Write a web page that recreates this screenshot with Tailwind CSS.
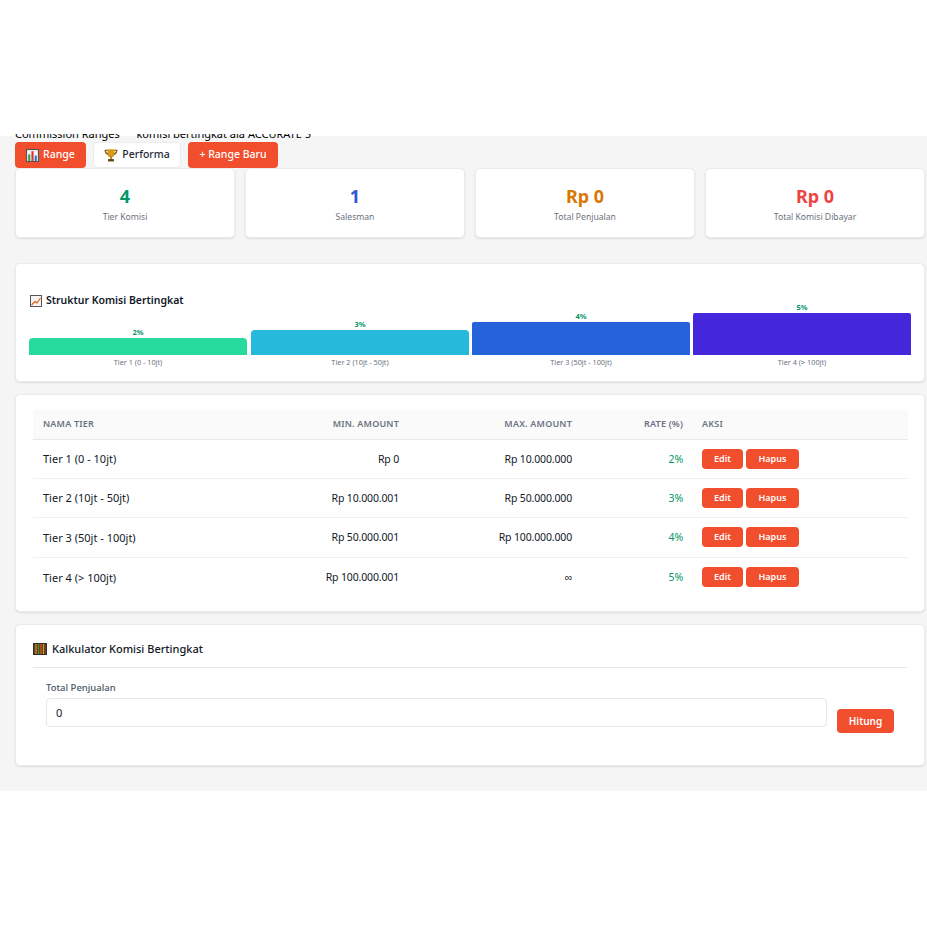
<!DOCTYPE html>
<html lang="id">
<head>
    <meta charset="UTF-8">
    <meta name="viewport" content="width=device-width, initial-scale=1.0">
    <title>Commission Ranges</title>
    <script src="https://cdn.jsdelivr.net/npm/@tailwindcss/browser@4"></script>
</head>
<body class="bg-white font-['Noto_Sans',sans-serif] text-[#1f2937]">
    <div class="h-[134px]"></div>
    <div class="h-[657px] overflow-hidden">
        <div class="h-[2px]"></div>
        <main class="flow-root h-[655px] bg-[#f5f5f5] pl-[15px] pr-[2px]">
            <!-- Page title, cut off at the top as in the screen -->
            <p class="-mt-[10px] h-[16px] text-[11px] leading-[15px] text-black whitespace-nowrap">Commission Ranges <span class="text-transparent">—</span> komisi bertingkat ala ACCURATE 5</p>

            <!-- Toolbar -->
            <div class="flex h-[26px] gap-[7px] text-[10.500px] font-medium">
                <button class="flex w-[71px] items-center justify-center gap-[4px] rounded-[4px] bg-[#f04e2d] text-white">
                    <svg class="h-[13px] w-[13px]" viewBox="0 0 12 12"><rect x=".5" y=".5" width="11" height="11" fill="#f5f5f5" stroke="#555"/><rect x="2" y="5" width="2" height="6" fill="#2f9e44"/><rect x="5" y="2" width="2" height="9" fill="#e03131"/><rect x="8" y="6" width="2" height="5" fill="#1c7ed6"/></svg>
                    Range
                </button>
                <button class="flex w-[88px] items-center justify-center gap-[4px] rounded-[4px] border border-[#ececec] bg-white text-[#1f2937]">
                    <svg class="h-[14px] w-[14px]" viewBox="0 0 12 12"><path d="M3 1h6v4a3 3 0 0 1-6 0z" fill="#d99a1c"/><path d="M3 2H1c0 2 1 3 2.500 3.500M9 2h2c0 2-1 3-2.500 3.500" fill="none" stroke="#8a5a0a"/><rect x="5.300" y="7" width="1.400" height="2.500" fill="#a8730f"/><rect x="3.500" y="9.500" width="5" height="2" fill="#5c4208"/></svg>
                    Performa
                </button>
                <button class="w-[90px] rounded-[4px] bg-[#f04e2d] text-white">+ Range Baru</button>
            </div>

            <!-- Stat cards -->
            <div class="grid w-[910px] grid-cols-4 gap-[10px]">
                <div class="flex h-[70px] flex-col items-center rounded-[5px] border border-[#ebebeb] bg-white pt-[15px] shadow-[0_1px_2px_rgba(0,0,0,0.1)]">
                    <span class="text-[18px] leading-[24px] font-bold text-[#059669]">4</span>
                    <span class="mt-[3px] text-[8.600px] leading-[13px] text-[#6b7280]">Tier Komisi</span>
                </div>
                <div class="flex h-[70px] flex-col items-center rounded-[5px] border border-[#ebebeb] bg-white pt-[15px] shadow-[0_1px_2px_rgba(0,0,0,0.1)]">
                    <span class="text-[18px] leading-[24px] font-bold text-[#3056d3]">1</span>
                    <span class="mt-[3px] text-[8.600px] leading-[13px] text-[#6b7280]">Salesman</span>
                </div>
                <div class="flex h-[70px] flex-col items-center rounded-[5px] border border-[#ebebeb] bg-white pt-[15px] shadow-[0_1px_2px_rgba(0,0,0,0.1)]">
                    <span class="text-[18px] leading-[24px] font-bold text-[#d97706]">Rp 0</span>
                    <span class="mt-[3px] text-[8.600px] leading-[13px] text-[#6b7280]">Total Penjualan</span>
                </div>
                <div class="flex h-[70px] flex-col items-center rounded-[5px] border border-[#ebebeb] bg-white pt-[15px] shadow-[0_1px_2px_rgba(0,0,0,0.1)]">
                    <span class="text-[18px] leading-[24px] font-bold text-[#ef4444]">Rp 0</span>
                    <span class="mt-[3px] text-[8.600px] leading-[13px] text-[#6b7280]">Total Komisi Dibayar</span>
                </div>
            </div>

            <!-- Chart -->
            <section class="mt-[25px] h-[119px] w-[910px] rounded-[5px] border border-[#ebebeb] bg-white px-[13px] pt-[29px] shadow-[0_1px_2px_rgba(0,0,0,0.1)]">
                <h2 class="flex h-[16px] items-center gap-[4px] pl-[1px] text-[10.500px] font-semibold text-[#111827]">
                    <svg class="h-3 w-3" viewBox="0 0 12 12"><rect x=".5" y=".5" width="11" height="11" fill="#f5f5f5" stroke="#555"/><path d="M1.500 10 5 6.500l2 1.500 3.500-5" fill="none" stroke="#e8590c" stroke-width="1.200"/></svg>
                    Struktur Komisi Bertingkat
                </h2>
                <div class="-mt-[2px] flex h-[48px] items-end gap-[3px]">
                    <div class="mr-[1px] w-[218px] text-center">
                        <div class="text-[7.500px] leading-[11px] font-bold text-[#059669]">2%</div>
                        <div class="h-[17px] rounded-t-[4px] bg-[#27db9f]"></div>
                    </div>
                    <div class="w-[218px] text-center">
                        <div class="text-[7.500px] leading-[11px] font-bold text-[#059669]">3%</div>
                        <div class="h-[25px] rounded-t-[4px] bg-[#25b9db]"></div>
                    </div>
                    <div class="w-[218px] text-center">
                        <div class="text-[7.500px] leading-[11px] font-bold text-[#059669]">4%</div>
                        <div class="h-[33px] rounded-t-[2px] bg-[#2563db]"></div>
                    </div>
                    <div class="w-[218px] text-center">
                        <div class="text-[7.500px] leading-[11px] font-bold text-[#059669]">5%</div>
                        <div class="h-[42px] rounded-t-[2px] bg-[#4527db]"></div>
                    </div>
                </div>
                <div class="mt-[1px] flex gap-[3px] text-center text-[7.300px] leading-[12px] text-[#6b7280]">
                    <div class="mr-[1px] w-[218px]">Tier 1 (0 - 10jt)</div>
                    <div class="w-[218px]">Tier 2 (10jt - 50jt)</div>
                    <div class="w-[218px]">Tier 3 (50jt - 100jt)</div>
                    <div class="w-[218px]">Tier 4 (&gt; 100jt)</div>
                </div>
            </section>

            <!-- Tier table -->
            <section class="mt-[12px] h-[218px] w-[910px] rounded-[5px] border border-[#ebebeb] bg-white px-[17px] pt-[15px] shadow-[0_1px_2px_rgba(0,0,0,0.1)]">
                <table class="w-[875px] table-fixed text-[10.500px] tracking-[-0.15px] text-[#111827]">
                    <thead>
                        <tr class="h-[29px] border-b border-[#e5e7eb] bg-[#fafafa] text-[9px] font-semibold tracking-[0.2px] text-[#6b7280]">
                            <th class="w-[220px] pb-[2px] pl-[10px] text-left font-semibold">NAMA TIER</th>
                            <th class="w-[156px] pb-[2px] pr-[10px] text-right font-semibold">MIN. AMOUNT</th>
                            <th class="w-[173px] pb-[2px] pr-[10px] text-right font-semibold">MAX. AMOUNT</th>
                            <th class="w-[111px] pb-[2px] pr-[10px] text-right font-semibold">RATE (%)</th>
                            <th class="pb-[2px] pl-[9px] text-left font-semibold">AKSI</th>
                        </tr>
                    </thead>
                    <tbody>
                        <tr class="h-[39px] border-b border-[#f0f0f0]">
                            <td class="pt-[2px] pl-[10px] text-[11px] tracking-normal">Tier 1 (0 - 10jt)</td>
                            <td class="pt-[2px] pr-[10px] text-right">Rp 0</td>
                            <td class="pt-[2px] pr-[10px] text-right">Rp 10.000.000</td>
                            <td class="pt-[2px] pr-[10px] text-right text-[#059669]">2%</td>
                            <td class="pl-[9px]"><div class="flex gap-[3px] text-[9px] font-semibold tracking-normal text-white"><button class="h-[20px] w-[41px] rounded-[4px] bg-[#f04e2d]">Edit</button><button class="h-[20px] w-[53px] rounded-[4px] bg-[#f04e2d]">Hapus</button></div></td>
                        </tr>
                        <tr class="h-[39px] border-b border-[#f0f0f0]">
                            <td class="pt-[2px] pl-[10px] text-[11px] tracking-normal">Tier 2 (10jt - 50jt)</td>
                            <td class="pt-[2px] pr-[10px] text-right">Rp 10.000.001</td>
                            <td class="pt-[2px] pr-[10px] text-right">Rp 50.000.000</td>
                            <td class="pt-[2px] pr-[10px] text-right text-[#059669]">3%</td>
                            <td class="pl-[9px]"><div class="flex gap-[3px] text-[9px] font-semibold tracking-normal text-white"><button class="h-[20px] w-[41px] rounded-[4px] bg-[#f04e2d]">Edit</button><button class="h-[20px] w-[53px] rounded-[4px] bg-[#f04e2d]">Hapus</button></div></td>
                        </tr>
                        <tr class="h-[40px] border-b border-[#f0f0f0]">
                            <td class="pt-[2px] pl-[10px] text-[11px] tracking-normal">Tier 3 (50jt - 100jt)</td>
                            <td class="pt-[2px] pr-[10px] text-right">Rp 50.000.001</td>
                            <td class="pt-[2px] pr-[10px] text-right">Rp 100.000.000</td>
                            <td class="pt-[2px] pr-[10px] text-right text-[#059669]">4%</td>
                            <td class="pl-[9px]"><div class="flex gap-[3px] text-[9px] font-semibold tracking-normal text-white"><button class="h-[20px] w-[41px] rounded-[4px] bg-[#f04e2d]">Edit</button><button class="h-[20px] w-[53px] rounded-[4px] bg-[#f04e2d]">Hapus</button></div></td>
                        </tr>
                        <tr class="h-[39px]">
                            <td class="pt-[2px] pl-[10px] text-[11px] tracking-normal">Tier 4 (&gt; 100jt)</td>
                            <td class="pt-[2px] pr-[10px] text-right">Rp 100.000.001</td>
                            <td class="pt-[2px] pr-[10px] text-right">∞</td>
                            <td class="pt-[2px] pr-[10px] text-right text-[#059669]">5%</td>
                            <td class="pl-[9px]"><div class="flex gap-[3px] text-[9px] font-semibold tracking-normal text-white"><button class="h-[20px] w-[41px] rounded-[4px] bg-[#f04e2d]">Edit</button><button class="h-[20px] w-[53px] rounded-[4px] bg-[#f04e2d]">Hapus</button></div></td>
                        </tr>
                    </tbody>
                </table>
            </section>

            <!-- Calculator -->
            <section class="mt-[12px] h-[142px] w-[910px] rounded-[5px] border border-[#ebebeb] bg-white px-[17px] pt-[15px] shadow-[0_1px_2px_rgba(0,0,0,0.1)]">
                <h2 class="flex h-[18px] items-center gap-[5px] text-[11px] font-medium text-[#111827]">
                    <svg class="h-[14px] w-[14px]" viewBox="0 0 14 14"><rect y="1" width="14" height="12" fill="#33302e"/><rect x="1" y="2" width="12" height="10" fill="#6b3f1d"/><path d="M3 2v10" stroke="#c9a227"/><path d="M5.500 2v10" stroke="#2f9e44"/><path d="M8 2v10" stroke="#e8590c"/><path d="M10.500 2v10" stroke="#c9a227"/></svg>
                    Kalkulator Komisi Bertingkat
                </h2>
                <div class="mt-[9px] border-t border-[#e5e7eb] pl-[13px]">
                    <label class="mt-[14px] block text-[9.500px] leading-[12px] font-medium text-[#4b5563]">Total Penjualan</label>
                    <div class="mt-[4px] flex items-start gap-[10px]">
                        <input class="h-[29px] w-[781px] rounded-[4px] border border-[#e5e7eb] px-[9px] text-[11px] text-[#111827]" value="0">
                        <button class="mt-[11px] h-[24px] w-[57px] rounded-[4px] bg-[#f04e2d] text-[10px] font-semibold text-white">Hitung</button>
                    </div>
                </div>
            </section>
        </main>
    </div>
</body>
</html>
